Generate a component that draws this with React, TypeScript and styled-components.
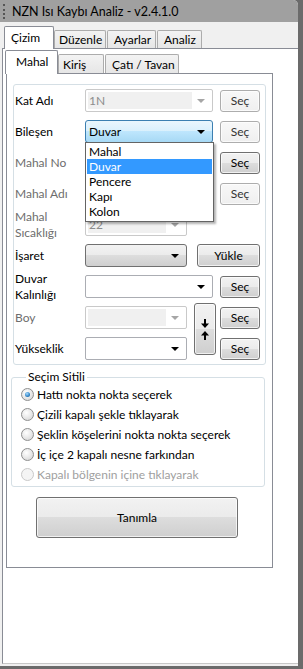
import React from 'react';
import styled, { createGlobalStyle, css } from 'styled-components';

const GlobalStyle = createGlobalStyle`
  html, body {
    margin: 0;
    padding: 0;
    background: #6b6b6b;
  }
  body {
    font-family: 'Segoe UI', Lato, 'Liberation Sans', sans-serif;
    font-size: 12px;
    color: #000;
  }
  * {
    box-sizing: border-box;
  }
`;

const Window = styled.div`
  width: 298px;
  height: 666px;
  display: flex;
  flex-direction: column;
  background: #f0f0f0;
  border-top-right-radius: 5px;
  overflow: hidden;
`;

const TitleBar = styled.div`
  height: 22px;
  flex-shrink: 0;
  display: flex;
  align-items: center;
  gap: 7px;
  padding-left: 3px;
  background: #a0a0a0;
  font-size: 12.5px;
`;

const Grip = styled.div`
  width: 2px;
  height: 15px;
  border-left: 2px dotted #555;
`;

const TabStrip = styled.div<{ $h: number; $pt: number; $pl: number }>`
  height: ${p => p.$h}px;
  flex-shrink: 0;
  display: flex;
  align-items: flex-end;
  padding-top: ${p => p.$pt}px;
  padding-left: ${p => p.$pl}px;
  position: relative;
  z-index: 2;
`;

const Tab = styled.div<{ $active?: boolean; $w: number; $pl: number; $h: number }>`
  width: ${p => p.$w}px;
  height: ${p => p.$h}px;
  padding-left: ${p => p.$pl}px;
  display: flex;
  align-items: center;
  white-space: nowrap;
  border: 1px solid #acacac;
  border-bottom: none;
  border-radius: 2px 2px 0 0;
  background: linear-gradient(#f3f3f3, #e6e6e6);
  margin-right: 1px;
  ${p =>
    p.$active &&
    css`
      border-color: #898c95;
      background: #fff;
      margin-bottom: -1px;
      margin-right: 0;
      padding-bottom: 2px;
    `}
`;

const OuterPage = styled.div`
  flex: 1;
  margin: 0 0 2px 2px;
  background: #fff;
  border-top: 1px solid #898c95;
  border-left: 1px solid #898c95;
  border-bottom: 1px solid #c8c8c8;
  padding: 2px 0 0 3px;
`;

const InnerTabs = styled.div`
  display: flex;
  flex-direction: column;
  width: 267px;
`;

const InnerPage = styled.div`
  height: 495px;
  border: 1px solid #898c95;
  padding: 10px 6px 0 6px;
  display: flex;
  flex-direction: column;
`;

const FieldGroup = styled.div`
  width: 253px;
  border: 1px solid #d5dfe5;
  border-radius: 3px;
  padding: 0 5px 0 1px;
`;

const FieldGrid = styled.div`
  display: grid;
  grid-template-columns: 70px 102px 7px 22px 4px 40px;
  grid-auto-rows: 31px;
  align-items: center;
`;

const FieldLabel = styled.div<{ $muted?: boolean }>`
  grid-column: 1;
  line-height: 16px;
  color: ${p => (p.$muted ? '#6d6d6d' : '#000')};
  white-space: nowrap;
`;

type ComboKind = 'disabled' | 'focus' | 'button' | 'plain';

const comboSkins: Record<ComboKind, ReturnType<typeof css>> = {
  disabled: css`
    border-color: #c9c9c9;
    background: #fff;
    color: #8d8d8d;
  `,
  focus: css`
    border-color: #3c7fb1;
    background: linear-gradient(#eaf6fd 0%, #d9f0fc 50%, #bee6fd 50%, #a7d9f5 100%);
    border-radius: 3px;
  `,
  button: css`
    border-color: #707070;
    background: linear-gradient(#f2f2f2 0%, #ebebeb 50%, #dddddd 50%, #cfcfcf 100%);
    border-radius: 3px;
  `,
  plain: css`
    border-color: #abadb3;
    background: #fff;
  `,
};

const Combo = styled.div<{ $kind: ComboKind; $wide?: boolean }>`
  grid-column: ${p => (p.$wide ? '2 / 5' : '2')};
  width: ${p => (p.$wide ? 128 : 102)}px;
  height: 23px;
  position: relative;
  display: flex;
  align-items: center;
  padding: 2px;
  border: 1px solid;
  border-radius: 2px;
  ${p => comboSkins[p.$kind]}
`;

const ComboField = styled.div<{ $grey?: boolean }>`
  flex: 1;
  height: 100%;
  display: flex;
  align-items: center;
  padding-left: 1px;
  background: ${p => (p.$grey ? '#f0f0f0' : 'transparent')};
  margin-right: ${p => (p.$grey ? 0 : 2)}px;
`;

const ComboArrowBox = styled.div`
  width: 18px;
  display: flex;
  justify-content: center;
`;

const Arrow = styled.span<{ $dim?: boolean }>`
  width: 0;
  height: 0;
  border-left: 4px solid transparent;
  border-right: 4px solid transparent;
  border-top: 4px solid ${p => (p.$dim ? '#a6a6a6' : '#000')};
`;

const DropList = styled.div`
  position: absolute;
  top: 21px;
  left: -1px;
  width: 129px;
  background: #fff;
  border: 1px solid #646464;
  box-shadow: 2px 2px 2px rgba(0, 0, 0, 0.3);
  padding: 1px 0 2px;
  z-index: 5;
  color: #000;
`;

const DropItem = styled.div<{ $selected?: boolean }>`
  height: 15px;
  line-height: 15px;
  padding-left: 2px;
  margin: 0 1px;
  background: ${p => (p.$selected ? '#3399ff' : 'transparent')};
  color: ${p => (p.$selected ? '#fff' : '#000')};
`;

const buttonFace = css`
  border: 1px solid #707070;
  border-radius: 3px;
  background: linear-gradient(#f2f2f2 0%, #ebebeb 50%, #dddddd 50%, #cfcfcf 100%);
  box-shadow: inset 0 0 0 1px rgba(255, 255, 255, 0.7);
  font: inherit;
  color: #000;
  padding: 0;
`;

const SecButton = styled.button<{ $dim?: boolean }>`
  ${buttonFace}
  grid-column: 6;
  width: 40px;
  height: 22px;
  ${p =>
    p.$dim &&
    css`
      border-color: #adadad;
      background: linear-gradient(#f8f8f8, #efefef);
      color: #333;
    `}
`;

const LoadButton = styled.button`
  ${buttonFace}
  grid-column: 4 / span 3;
  margin-left: 3px;
  height: 23px;
`;

const SwapButton = styled.button`
  ${buttonFace}
  grid-column: 4;
  grid-row: 8 / 10;
  align-self: start;
  margin-top: 1px;
  height: 52px;
  width: 22px;
  display: flex;
  flex-direction: column;
  align-items: center;
  justify-content: center;
  gap: 3px;
`;

const SelectionSet = styled.fieldset`
  margin: 5px 0 0 -2px;
  width: 254px;
  border: 1px solid #d5dfe5;
  border-radius: 3px;
  padding: 0 0 2px 9px;
`;

const Legend = styled.legend`
  padding: 0 2px;
  margin-left: 5px;
  line-height: 14px;
`;

const RadioRow = styled.div<{ $disabled?: boolean }>`
  height: 20px;
  display: flex;
  align-items: center;
  gap: 3px;
  color: ${p => (p.$disabled ? '#a0a0a0' : '#000')};
`;

const RadioDot = styled.span<{ $checked?: boolean; $disabled?: boolean }>`
  width: 13px;
  height: 13px;
  border-radius: 50%;
  border: 1px solid ${p => (p.$disabled ? '#c9c9c9' : '#8e8f8f')};
  background: ${p =>
    p.$disabled
      ? '#f4f4f4'
      : 'radial-gradient(circle at 40% 35%, #ffffff 0%, #e6e6e6 55%, #cfcfcf 100%)'};
  display: flex;
  align-items: center;
  justify-content: center;
  flex-shrink: 0;

  &::after {
    content: '';
    display: ${p => (p.$checked ? 'block' : 'none')};
    width: 5px;
    height: 5px;
    border-radius: 50%;
    background: radial-gradient(circle at 40% 35%, #a9dcff 0%, #2f83c5 60%, #174e80 100%);
  }
`;

const DefineButton = styled.button`
  ${buttonFace}
  margin: 10px 0 0 23px;
  width: 202px;
  height: 41px;
`;

const ArrowIcon = ({ up }: { up?: boolean }) => (
  <svg width="8" height="9" viewBox="0 0 8 9">
    <g transform={up ? 'rotate(180 4 4.5)' : undefined}>
      <rect x="3" y="0" width="2" height="5" fill="#000" />
      <path d="M0 4.5 L8 4.5 L4 9 Z" fill="#000" />
    </g>
  </svg>
);

const ComboBox = ({
  kind,
  wide,
  value,
  children,
}: {
  kind: ComboKind;
  wide?: boolean;
  value?: string;
  children?: React.ReactNode;
}) => (
  <Combo $kind={kind} $wide={wide}>
    <ComboField $grey={kind === 'disabled'}>{value}</ComboField>
    <ComboArrowBox>
      <Arrow $dim={kind === 'disabled'} />
    </ComboArrowBox>
    {children}
  </Combo>
);

const options = ['Mahal', 'Duvar', 'Pencere', 'Kapı', 'Kolon'];

const radios = [
  { text: 'Hattı nokta nokta seçerek', checked: true },
  { text: 'Çizili kapalı şekle tıklayarak' },
  { text: 'Şeklin köşelerini nokta nokta seçerek' },
  { text: 'İç içe 2 kapalı nesne farkından' },
  { text: 'Kapalı bölgenin içine tıklayarak', disabled: true },
];

export default function App() {
  return (
    <>
      <GlobalStyle />
      <Window>
        <TitleBar>
          <Grip />
          <span>NZN Isı Kaybı Analiz - v2.4.1.0</span>
        </TitleBar>

        <TabStrip $h={26} $pt={5} $pl={4}>
          <Tab $active $w={50} $pl={6} $h={23}>Çizim</Tab>
          <Tab $w={52} $pl={4} $h={18}>Düzenle</Tab>
          <Tab $w={49} $pl={6} $h={18}>Ayarlar</Tab>
          <Tab $w={45} $pl={6} $h={18}>Analiz</Tab>
        </TabStrip>

        <OuterPage>
          <InnerTabs>
            <TabStrip $h={22} $pt={0} $pl={0}>
              <Tab $active $w={53} $pl={10} $h={24} style={{ marginLeft: -1 }}>
                Mahal
              </Tab>
              <Tab $w={46} $pl={4} $h={19}>Kiriş</Tab>
              <Tab $w={74} $pl={6} $h={19}>Çatı / Tavan</Tab>
            </TabStrip>

            <InnerPage>
              <FieldGroup>
                <FieldGrid>
                  <FieldLabel>Kat Adı</FieldLabel>
                  <ComboBox kind="disabled" wide value="1N" />
                  <SecButton $dim>Seç</SecButton>

                  <FieldLabel>Bileşen</FieldLabel>
                  <ComboBox kind="focus" wide value="Duvar">
                    <DropList>
                      {options.map(o => (
                        <DropItem key={o} $selected={o === 'Duvar'}>
                          {o}
                        </DropItem>
                      ))}
                    </DropList>
                  </ComboBox>
                  <SecButton $dim>Seç</SecButton>

                  <FieldLabel $muted>Mahal No</FieldLabel>
                  <ComboBox kind="disabled" wide />
                  <SecButton>Seç</SecButton>

                  <FieldLabel $muted>Mahal Adı</FieldLabel>
                  <ComboBox kind="disabled" wide />
                  <SecButton $dim>Seç</SecButton>

                  <FieldLabel $muted>
                    Mahal
                    <br />
                    Sıcaklığı
                  </FieldLabel>
                  <ComboBox kind="disabled" value="22" />

                  <FieldLabel>İşaret</FieldLabel>
                  <ComboBox kind="button" />
                  <LoadButton>Yükle</LoadButton>

                  <FieldLabel>
                    Duvar
                    <br />
                    Kalınlığı
                  </FieldLabel>
                  <ComboBox kind="plain" wide />
                  <SecButton>Seç</SecButton>

                  <FieldLabel $muted>Boy</FieldLabel>
                  <ComboBox kind="disabled" />
                  <SwapButton>
                    <ArrowIcon />
                    <ArrowIcon up />
                  </SwapButton>
                  <SecButton>Seç</SecButton>

                  <FieldLabel>Yükseklik</FieldLabel>
                  <ComboBox kind="plain" />
                  <SecButton>Seç</SecButton>
                </FieldGrid>
              </FieldGroup>

              <SelectionSet>
                <Legend>Seçim Sitili</Legend>
                {radios.map(r => (
                  <RadioRow key={r.text} $disabled={r.disabled}>
                    <RadioDot $checked={r.checked} $disabled={r.disabled} />
                    {r.text}
                  </RadioRow>
                ))}
              </SelectionSet>

              <DefineButton>Tanımla</DefineButton>
            </InnerPage>
          </InnerTabs>
        </OuterPage>
      </Window>
    </>
  );
}
